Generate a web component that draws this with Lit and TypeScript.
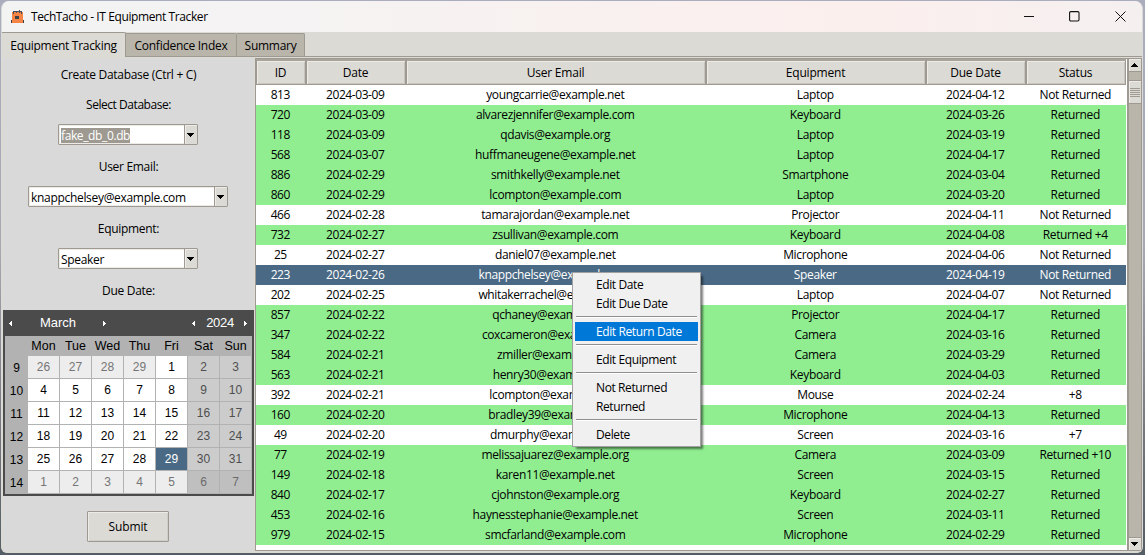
import { LitElement, html, css, svg } from "lit";
import { customElement, property } from "lit/decorators.js";
import { classMap } from "lit/directives/class-map.js";

type Row = [string, string, string, string, string, string];

const ROWS: Row[] = [
  ["813", "2024-03-09", "youngcarrie@example.net", "Laptop", "2024-04-12", "Not Returned"],
  ["720", "2024-03-09", "alvarezjennifer@example.com", "Keyboard", "2024-03-26", "Returned"],
  ["118", "2024-03-09", "qdavis@example.org", "Laptop", "2024-03-19", "Returned"],
  ["568", "2024-03-07", "huffmaneugene@example.net", "Laptop", "2024-04-17", "Returned"],
  ["886", "2024-02-29", "smithkelly@example.net", "Smartphone", "2024-03-04", "Returned"],
  ["860", "2024-02-29", "lcompton@example.com", "Laptop", "2024-03-20", "Returned"],
  ["466", "2024-02-28", "tamarajordan@example.net", "Projector", "2024-04-11", "Not Returned"],
  ["732", "2024-02-27", "zsullivan@example.com", "Keyboard", "2024-04-08", "Returned +4"],
  ["25", "2024-02-27", "daniel07@example.net", "Microphone", "2024-04-06", "Not Returned"],
  ["223", "2024-02-26", "knappchelsey@example.com", "Speaker", "2024-04-19", "Not Returned"],
  ["202", "2024-02-25", "whitakerrachel@example.net", "Laptop", "2024-04-07", "Not Returned"],
  ["857", "2024-02-22", "qchaney@example.com", "Projector", "2024-04-17", "Returned"],
  ["347", "2024-02-22", "coxcameron@example.com", "Camera", "2024-03-16", "Returned"],
  ["584", "2024-02-21", "zmiller@example.com", "Camera", "2024-03-29", "Returned"],
  ["563", "2024-02-21", "henry30@example.com", "Keyboard", "2024-04-03", "Returned"],
  ["392", "2024-02-21", "lcompton@example.com", "Mouse", "2024-02-24", "+8"],
  ["160", "2024-02-20", "bradley39@example.com", "Microphone", "2024-04-13", "Returned"],
  ["49", "2024-02-20", "dmurphy@example.com", "Screen", "2024-03-16", "+7"],
  ["77", "2024-02-19", "melissajuarez@example.org", "Camera", "2024-03-09", "Returned +10"],
  ["149", "2024-02-18", "karen11@example.net", "Screen", "2024-03-15", "Returned"],
  ["840", "2024-02-17", "cjohnston@example.org", "Keyboard", "2024-02-27", "Returned"],
  ["453", "2024-02-16", "haynesstephanie@example.net", "Screen", "2024-03-11", "Returned"],
  ["979", "2024-02-15", "smcfarland@example.com", "Microphone", "2024-02-29", "Returned"],
];
const SELECTED_ID = "223";

@customElement("title-bar")
class TitleBar extends LitElement {
  static styles = css`
    :host { display: flex; flex: none; height: 31px; align-items: center; background: linear-gradient(90deg, #f3f3f3, #f5f3f3 25%, #fbefed 75%, #f5f0f0); color: #000; }
    .icon { margin-left: 9px; width: 13px; height: 14px; display: block; }
    .title { margin-left: 7px; flex: 1; letter-spacing: -0.4px; line-height: 16px; }
    .buttons { display: flex; align-items: center; }
    .buttons svg { display: block; margin-right: 35px; }
    .buttons svg:first-child { margin-right: 34px; }
    .buttons svg:last-child { margin-right: 16px; }
  `;
  render() {
    return html`
      <svg class="icon" viewBox="0 0 13 14" shape-rendering="crispEdges">
        <path d="M1 2h11v11H1z" fill="#f58345" />
        <path d="M0 10h13v3H0z" fill="#f58345" />
        <path d="M2 1h1v3H2zM5 1h1v2H5zM8 0h1v3H8zM10 1h1v3h-1zM3 1h7v1H3z" fill="#47505a" />
        <path d="M4 6h4v3H4zM0 10h1v3H0zM12 10h1v3h-1z" fill="#3f4043" />
      </svg>
      <span class="title">TechTacho - IT Equipment Tracker</span>
      <div class="buttons">
        <svg width="11" height="11"><path d="M0 5.5h10" stroke="#111" fill="none" /></svg>
        <svg width="11" height="11"><rect x="0.6" y="0.6" width="9.4" height="9.4" rx="1.2" stroke="#111" stroke-width="1.1" fill="none" /></svg>
        <svg width="11" height="11"><path d="M.5 .5l10 10M10.5 .5l-10 10" stroke="#111" fill="none" /></svg>
      </div>
    `;
  }
}

@customElement("combo-box")
class ComboBox extends LitElement {
  @property() value = "";
  @property({ type: Boolean, reflect: true }) wide = false;
  @property({ type: Boolean }) selected = false;
  static styles = css`
    :host { display: flex; box-sizing: border-box; width: 140px; height: 21px; border: 1px solid #9e9a91; border-radius: 1px; background: #fff; color: #000; }
    :host([wide]) { width: 200px; }
    .field { flex: 1; padding: 1px 0 0 1px; border: 1px solid #eeebe7; border-right: 0; }
    .text { display: inline-block; height: 15px; line-height: 15px; letter-spacing: -0.31px; }
    .selected { background: #9e9a91; color: #fff; letter-spacing: -0.38px; }
    .arrow { width: 12px; border-left: 1px solid #9e9a91; background: #dcdad5; display: flex; align-items: center; justify-content: center; box-shadow: inset 1px 1px #eeebe7; }
    .arrow svg { margin-right: 1px; }
  `;
  render() {
    return html`
      <div class="field"><span class=${classMap({ text: true, selected: this.selected })}>${this.value}</span></div>
      <div class="arrow"><svg width="7" height="4" shape-rendering="crispEdges"><path d="M0 0h7v1H6v1H5v1H4v1H3V3H2V2H1V1H0z" /></svg></div>
    `;
  }
}

const WEEKS: [number, number[]][] = [
  [9, [26, 27, 28, 29, 1, 2, 3]],
  [10, [4, 5, 6, 7, 8, 9, 10]],
  [11, [11, 12, 13, 14, 15, 16, 17]],
  [12, [18, 19, 20, 21, 22, 23, 24]],
  [13, [25, 26, 27, 28, 29, 30, 31]],
  [14, [1, 2, 3, 4, 5, 6, 7]],
];

@customElement("month-calendar")
class MonthCalendar extends LitElement {
  static styles = css`
    :host { display: block; box-sizing: border-box; width: 251px; height: 186px; background: #4b4b4b; padding: 0 2px 2px; font-family: "Liberation Sans", Arial, sans-serif; font-size: 12px; }
    .head { display: flex; height: 26px; align-items: center; color: #fff; font-size: 13px; line-height: 16px; letter-spacing: 0; }
    .head svg { display: block; fill: #fff; }
    .prev { padding-left: 4px; }
    .month { width: 90px; text-align: center; }
    .mnext { flex: 1; }
    .year { width: 48px; text-align: center; letter-spacing: -0.3px; }
    .next { padding-right: 4px; }
    .grid { display: grid; grid-template-columns: 23px repeat(7, 32px); row-gap: 1px; grid-template-rows: 19px repeat(6, 22px); background: #b2b2b2; height: 158px; }
    .cell { display: flex; align-items: center; justify-content: center; border-right: 1px solid #b2b2b2; background: #fff; color: #000; padding-bottom: 1px; letter-spacing: 0; }
    .name { background: #b2b2b2; padding: 1px 0 0; font-size: 12.5px; }
    .week { background: #b2b2b2; border: 0; padding: 2px 0 0; }
    .weekend { background: #cccccc; color: #4f4f4f; }
    .other { background: #ededed; color: #757575; }
    .other.weekend { background: #bfbfbf; color: #6b6b6b; }
    .today { background: #4a6984; color: #fff; }
  `;
  private arrow(left: boolean) {
    return html`<svg width="4" height="7" shape-rendering="crispEdges">${left
      ? svg`<path d="M3 1v5H2V5H1V4H0V3h1V2h1V1z" />`
      : svg`<path d="M0 1v5h1V5h1V4h1V3H2V2H1V1z" />`}</svg>`;
  }
  render() {
    return html`
      <div class="head">
        <span class="prev">${this.arrow(true)}</span><span class="month">March</span><span class="mnext">${this.arrow(false)}</span>
        <span>${this.arrow(true)}</span><span class="year">2024</span><span class="next">${this.arrow(false)}</span>
      </div>
      <div class="grid">
        <span></span>
        ${["Mon", "Tue", "Wed", "Thu", "Fri", "Sat", "Sun"].map((d) => html`<span class="cell name">${d}</span>`)}
        ${WEEKS.map(([week, days], w) => html`
          <span class="cell week">${week}</span>
          ${days.map((day, i) => html`<span class=${classMap({
            cell: true,
            weekend: i > 4,
            other: (w === 0 && day > 20) || w === 5,
            today: w === 4 && day === 29,
          })}>${day}</span>`)}
        `)}
      </div>
    `;
  }
}

@customElement("side-form")
class SideForm extends LitElement {
  static styles = css`
    :host { display: flex; flex-direction: column; align-items: center; width: 251px; background: #d9d9d9; color: #000; letter-spacing: -0.3px; }
    .label { line-height: 18px; height: 16px; margin-bottom: 12px; }
    .first { margin: 8px 0 14px; }
    .tight { letter-spacing: -0.45px; }
    combo-box { margin: 0 1px 13px 0; }
    .submit { box-sizing: border-box; width: 82px; height: 31px; margin: 15px 1px 0 0; border: 1px solid #9e9a91; border-radius: 1px; background: #dcdad5; box-shadow: inset 1px 1px #eeebe7, inset -1px -1px #cfcdc8; font: inherit; letter-spacing: -0.1px; color: #000; padding: 0; }
  `;
  render() {
    return html`
      <div class="label first">Create Database (Ctrl + C)</div>
      <div class="label tight">Select Database:</div>
      <combo-box value="fake_db_0.db" selected></combo-box>
      <div class="label">User Email:</div>
      <combo-box value="knappchelsey@example.com" wide></combo-box>
      <div class="label">Equipment:</div>
      <combo-box value="Speaker"></combo-box>
      <div class="label">Due Date:</div>
      <month-calendar></month-calendar>
      <button class="submit">Submit</button>
    `;
  }
}

@customElement("equipment-table")
class EquipmentTable extends LitElement {
  static styles = css`
    :host { display: block; box-sizing: border-box; width: 872px; background: #fff; border: 1px solid #9e9a91; border-right: 0; color: #000; letter-spacing: -0.35px; }
    .row { display: grid; grid-template-columns: 50px 100px 300px 220px 100px 100px; width: 870px; height: 20px; line-height: 20px; text-align: center; }
    .row span { padding-right: 1.5px; }
    .head { height: 26px; line-height: 24px; background: #dcdad5; letter-spacing: -0.2px; }
    .th { box-sizing: border-box; height: 26px; padding-right: 1px; border: 1px solid #9e9a91; border-top-width: 2px; border-top-color: #a8a49c; box-shadow: inset 1px 1px #eeebe7, inset -1px -1px #c8c5be; }
    .date { letter-spacing: -0.42px; }
    .id { letter-spacing: -0.5px; }
    .email { letter-spacing: -0.37px; }
    .returned { background: #90ee90; }
    .selected { background: #4a6984; color: #fff; }
  `;
  render() {
    return html`
      <div class="row head">${["ID", "Date", "User Email", "Equipment", "Due Date", "Status"].map((h) => html`<div class="th">${h}</div>`)}</div>
      ${ROWS.map((r) => html`
        <div class=${classMap({ row: true, returned: r[5].startsWith("Returned"), selected: r[0] === SELECTED_ID })}>
          ${r.map((c, i) => html`<span class=${classMap({ id: i === 0, date: i === 1 || i === 4, email: i === 2 })}>${c}</span>`)}
        </div>`)}
    `;
  }
}

@customElement("scroll-bar")
class ScrollBar extends LitElement {
  static styles = css`
    :host { display: flex; flex-direction: column; box-sizing: border-box; width: 15px; background: #bab5ab; border: 1px solid #9e9a91; border-left-width: 2px; }
    .btn { height: 12px; background: #dcdad5; border-bottom: 1px solid #9e9a91; box-shadow: inset 1px 1px #eeebe7; display: flex; align-items: center; justify-content: center; }
    .btn svg { margin-right: 1px; }
    .down { margin-top: auto; border-bottom: 0; border-top: 1px solid #9e9a91; }
    .thumb { height: 22px; margin-top: 8px; background: #dcdad5; border: solid #9e9a91; border-width: 1px 0; box-shadow: inset 1px 1px #eeebe7; display: flex; flex-direction: column; gap: 1px; align-items: center; justify-content: center; }
    .grip { width: 10px; height: 1px; background: #9e9a91; }
  `;
  render() {
    return html`
      <div class="btn"><svg width="7" height="4" shape-rendering="crispEdges"><path d="M0 4h7V3H6V2H5V1H4V0H3v1H2v1H1v1H0z" /></svg></div>
      <div class="thumb">${[0, 1, 2, 3, 4].map(() => html`<i class="grip"></i>`)}</div>
      <div class="btn down"><svg width="7" height="4" shape-rendering="crispEdges"><path d="M0 0h7v1H6v1H5v1H4v1H3V3H2V2H1V1H0z" /></svg></div>
    `;
  }
}

const MENU = [["Edit Date", "Edit Due Date"], ["Edit Return Date"], ["Edit Equipment"], ["Not Returned", "Returned"], ["Delete"]];

@customElement("context-menu")
class ContextMenu extends LitElement {
  static styles = css`
    :host { display: block; box-sizing: border-box; width: 129px; height: 175px; padding: 2px; background: #f0f0f0; border: 1px solid #a0a0a0; box-shadow: 3px 3px 2px -1px rgba(0, 0, 0, 0.5); color: #000; letter-spacing: -0.39px; }
    .item { height: 19px; line-height: 19px; padding-left: 21px; }
    .active { background: #0078d7; color: #fff; }
    .sep { height: 1px; margin: 3px 1px 4px; background: #8f8f8f; border-bottom: 1px solid #fff; }
  `;
  render() {
    return MENU.map((group, g) => html`
      ${g ? html`<div class="sep"></div>` : ""}
      ${group.map((label) => html`<div class=${classMap({ item: true, active: label === "Edit Return Date" })}>${label}</div>`)}
    `);
  }
}

@customElement("app-root")
class AppRoot extends LitElement {
  static styles = css`
    :host { display: block; box-sizing: border-box; position: relative; width: 1145px; height: 555px; padding: 1px 2px 2px 1px; overflow: hidden; font: 12px "Open Sans", "Noto Sans", sans-serif; background: linear-gradient(180deg, #a9adbd, #a6a8b2 45%, #71747b 80%, #555d65); }
    .window { display: flex; flex-direction: column; box-sizing: border-box; height: 552px; border: 1px solid #dcdad5; border-top: 0; border-radius: 8px 8px 6px 6px; background: #dcdad5; overflow: hidden; }
    .tabs { box-sizing: border-box; display: flex; align-items: flex-end; height: 25px; border-bottom: 1px solid #9e9a91; flex: none; letter-spacing: -0.28px; color: #000; }
    .tab { box-sizing: border-box; height: 23px; line-height: 24px; background: #bab5ab; border: 1px solid #9e9a91; border-left: 0; border-bottom: 0; text-align: center; border-top-right-radius: 2px; }
    .active { position: relative; top: 1px; height: 25px; line-height: 26px; width: 124px; background: #dcdad5; border-left: 0; }
    .index { width: 111px; }
    .summary { width: 68px; }
    .body { display: flex; flex: 1; min-height: 0; padding: 1px; }
    side-form, equipment-table, scroll-bar { flex: none; }
    equipment-table { margin-left: 1px; }
    .menu { position: absolute; left: 572px; top: 272px; }
  `;
  render() {
    return html`
      <div class="window">
        <title-bar></title-bar>
        <div class="tabs">
          <div class="tab active">Equipment Tracking</div>
          <div class="tab index">Confidence Index</div>
          <div class="tab summary">Summary</div>
        </div>
        <div class="body">
          <side-form></side-form>
          <equipment-table></equipment-table>
          <scroll-bar></scroll-bar>
        </div>
      </div>
      <context-menu class="menu"></context-menu>
    `;
  }
}
